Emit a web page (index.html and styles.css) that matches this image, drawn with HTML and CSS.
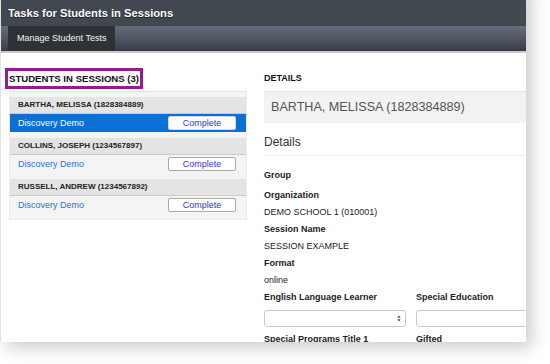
FILE: index.html
```html
<!doctype html>
<html lang="en">
  <head>
    <meta charset="UTF-8" />
    <meta name="viewport" content="width=device-width, initial-scale=1.0" />
    <title>Tasks for Students in Sessions</title>
    <link rel="stylesheet" href="styles.css">
  </head>
  <body>
    <div class="window">
      <header class="titlebar">Tasks for Students in Sessions</header>

      <nav class="tabs">
        <a class="tab active" href="#">Manage Student Tests</a>
      </nav>

      <main class="content">
        <section class="students">
          <h2 class="students-title">STUDENTS IN SESSIONS (3)</h2>

          <div class="student-list">
            <div class="student">
              <div class="student-name">BARTHA, MELISSA (1828384889)</div>
              <div class="test-row selected">
                <a class="test-name" href="#">Discovery Demo</a>
                <button class="status-btn">Complete</button>
              </div>
            </div>
            <div class="student">
              <div class="student-name">COLLINS, JOSEPH (1234567897)</div>
              <div class="test-row">
                <a class="test-name" href="#">Discovery Demo</a>
                <button class="status-btn">Complete</button>
              </div>
            </div>
            <div class="student">
              <div class="student-name">RUSSELL, ANDREW (1234567892)</div>
              <div class="test-row">
                <a class="test-name" href="#">Discovery Demo</a>
                <button class="status-btn">Complete</button>
              </div>
            </div>
          </div>
        </section>

        <section class="details">
          <h2 class="details-label">DETAILS</h2>
          <div class="details-name">BARTHA, MELISSA (1828384889)</div>
          <h3 class="details-heading">Details</h3>

          <dl class="fields">
            <dt>Group</dt>
            <dd class="empty"></dd>
            <dt>Organization</dt>
            <dd>DEMO SCHOOL 1 (010001)</dd>
            <dt>Session Name</dt>
            <dd>SESSION EXAMPLE</dd>
            <dt>Format</dt>
            <dd>online</dd>
          </dl>

          <div class="form-grid">
            <div class="form-field">
              <label>English Language Learner</label>
              <div class="select">
                <svg class="select-arrows" viewBox="0 0 6 10" fill="currentColor">
                  <path d="M3 0.5 L5.5 4 L0.5 4 Z" />
                  <path d="M3 9.5 L5.5 6 L0.5 6 Z" />
                </svg>
              </div>
            </div>
            <div class="form-field">
              <label>Special Education</label>
              <div class="input"></div>
            </div>
            <div class="form-field">
              <label>Special Programs Title 1</label>
            </div>
            <div class="form-field">
              <label>Gifted</label>
            </div>
          </div>
        </section>
      </main>
    </div>
  </body>
</html>
```

FILE: styles.css
```css
* {
  margin: 0;
  padding: 0;
  box-sizing: border-box;
}

html,
body {
  height: 100%;
  background: #fff;
  font-family: 'Liberation Sans', Arial, Helvetica, sans-serif;
  color: #222;
  overflow: hidden;
}

/* the screenshot is a crop: window starts above the top edge */
.window {
  width: 526px;
  height: 362px;
  margin-top: -20px;
  background: #fff;
  border-left: 1px solid #e2e2e2;
  box-shadow: 6px 6px 16px rgba(0, 0, 0, 0.2);
  overflow: hidden;
}

.titlebar {
  height: 46px;
  padding: 20px 0 0 7px;
  background: #42484f;
  color: #fff;
  font-size: 11.2px;
  font-weight: 700;
  line-height: 26px;
  text-shadow: 0 1px 1px rgba(0, 0, 0, 0.6);
  white-space: nowrap;
}

.tabs {
  display: flex;
  height: 27px;
  padding-left: 7px;
  background: linear-gradient(#666d7a 0%, #525866 45%, #383c43 100%);
  border-bottom: 2px solid #c7c9cb;
}

.tab {
  display: block;
  height: 25px;
  padding: 0 9px;
  background: #2e3237;
  color: #f2f2f2;
  font-size: 9px;
  line-height: 25px;
  text-decoration: none;
}

.content {
  display: flex;
  padding: 15px 0 0 4px;
}

/* Students column */
.students {
  width: 242px;
  flex-shrink: 0;
}

.students-title {
  display: inline-block;
  height: 21px;
  border: 3px solid #941c8e;
  padding: 0 1px;
  font-size: 9.6px;
  font-weight: 700;
  line-height: 15px;
  color: #111;
  white-space: nowrap;
}

.student-list {
  margin: 2px 0 0 4px;
  padding: 5px 0;
  background: #f4f4f4;
  border: 1px solid #ececec;
  border-top-color: #e4e4e4;
}

.student + .student {
  margin-top: 6px;
}

.student-name {
  height: 17px;
  padding-left: 8px;
  background: #e4e4e4;
  border-bottom: 1px solid #cbcbcb;
  font-size: 8px;
  font-weight: 700;
  line-height: 16px;
  color: #222;
}

.test-row {
  display: flex;
  align-items: center;
  justify-content: space-between;
  height: 18px;
  padding: 0 10px 0 8px;
}

.test-name {
  font-size: 9px;
  color: #2a72d6;
  text-decoration: none;
}

.status-btn {
  width: 68px;
  height: 14px;
  background: #fff;
  border: 1px solid #a9a9a9;
  border-radius: 2px;
  font-family: inherit;
  font-size: 9px;
  line-height: 12px;
  color: #3434d6;
}

.test-row.selected {
  background: #0b6fd8;
}

.test-row.selected .test-name {
  color: #fff;
}

.test-row.selected .status-btn {
  border-color: #d8d8d8;
}

/* Details column */
.details {
  width: 300px;
  flex-shrink: 0;
  margin-left: 17px;
}

.details-label {
  font-size: 9px;
  font-weight: 700;
  line-height: 20px;
  color: #111;
}

.details-name {
  height: 32px;
  margin-top: 3px;
  padding-left: 7px;
  background: #f2f2f2;
  border-top: 1px solid #e6e6e6;
  font-size: 12.6px;
  line-height: 31px;
  color: #555;
  white-space: nowrap;
}

.details-heading {
  margin-top: 10px;
  padding-bottom: 4px;
  border-bottom: 1px solid #eeeeee;
  font-size: 12px;
  font-weight: 400;
  line-height: 18px;
  color: #333;
}

.fields {
  margin-top: 11px;
  font-size: 9px;
  line-height: 17px;
  color: #222;
}

.fields dt {
  font-weight: 700;
}

.fields dd.empty {
  height: 3px;
}

.form-grid {
  display: grid;
  grid-template-columns: 142px 142px;
  column-gap: 10px;
  row-gap: 4px;
}

.form-field label {
  display: block;
  font-size: 9px;
  font-weight: 700;
  line-height: 17px;
  margin-bottom: 4px;
  color: #222;
}

.select,
.input {
  height: 17px;
  background: #fff;
  border: 1px solid #c9c9c9;
  border-radius: 3px;
}

.select {
  display: flex;
  align-items: center;
  justify-content: flex-end;
  padding-right: 4px;
}

.select-arrows {
  width: 4px;
  height: 7px;
  color: #444;
}

.input {
  width: 200px;
}
```
